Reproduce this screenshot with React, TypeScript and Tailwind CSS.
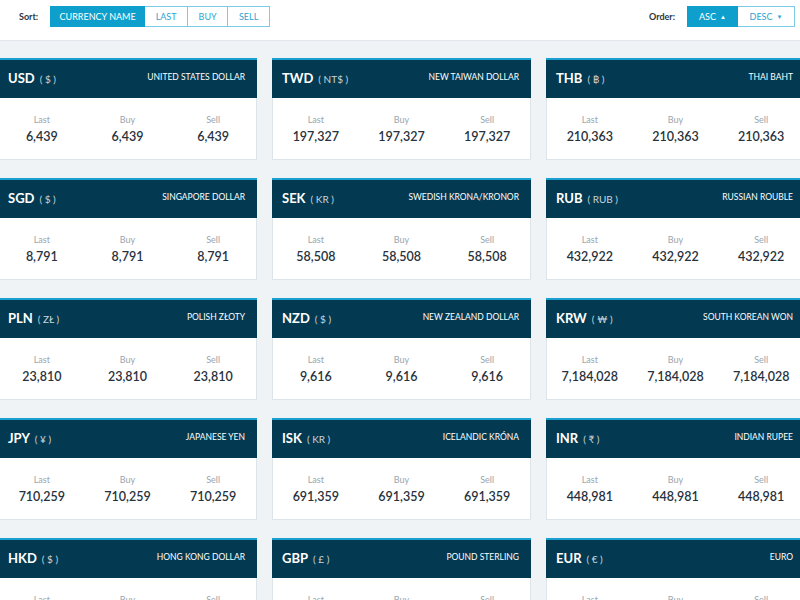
import React from 'react'

type Rate = { code: string; sym: string; name: string; value: string }

const rates: Rate[] = [
  { code: 'USD', sym: '$', name: 'UNITED STATES DOLLAR', value: '6,439' },
  { code: 'TWD', sym: 'NT$', name: 'NEW TAIWAN DOLLAR', value: '197,327' },
  { code: 'THB', sym: '฿', name: 'THAI BAHT', value: '210,363' },
  { code: 'SGD', sym: '$', name: 'SINGAPORE DOLLAR', value: '8,791' },
  { code: 'SEK', sym: 'KR', name: 'SWEDISH KRONA/KRONOR', value: '58,508' },
  { code: 'RUB', sym: 'RUB', name: 'RUSSIAN ROUBLE', value: '432,922' },
  { code: 'PLN', sym: 'ZŁ', name: 'POLISH ZŁOTY', value: '23,810' },
  { code: 'NZD', sym: '$', name: 'NEW ZEALAND DOLLAR', value: '9,616' },
  { code: 'KRW', sym: '₩', name: 'SOUTH KOREAN WON', value: '7,184,028' },
  { code: 'JPY', sym: '¥', name: 'JAPANESE YEN', value: '710,259' },
  { code: 'ISK', sym: 'KR', name: 'ICELANDIC KRÓNA', value: '691,359' },
  { code: 'INR', sym: '₹', name: 'INDIAN RUPEE', value: '448,981' },
  { code: 'HKD', sym: '$', name: 'HONG KONG DOLLAR', value: '3,046' },
  { code: 'GBP', sym: '£', name: 'POUND STERLING', value: '1,079' },
  { code: 'EUR', sym: '€', name: 'EURO', value: '1,004' },
]

const Card = ({ r }: { r: Rate }) => (
  <div className="flex flex-col border-t-2 border-[#1b9fd0] bg-white">
    <div className="flex h-[38px] items-start justify-between bg-[#033a52] pl-[10px] pr-[12px] pt-[9px] text-white">
      <div className="flex items-baseline">
        <span className="text-[13px] font-bold">{r.code}</span>
        <span className="ml-[5px] text-[10px] text-[#c9d6de]">( {r.sym} )</span>
      </div>
      <span className="pt-[2px] text-[8.5px]">{r.name}</span>
    </div>
    <div className="grid h-[62px] grid-cols-3 border-x border-b border-[#dde4ea] pt-[16px]">
      {['Last', 'Buy', 'Sell'].map((l) => (
        <div key={l} className="flex flex-col items-center">
          <span className="text-[9px] leading-[12px] text-[#9aa5ae]">{l}</span>
          <span className="mt-[3px] text-[12.5px] font-semibold leading-[16px] text-[#27323d]">{r.value}</span>
        </div>
      ))}
    </div>
  </div>
)

export default function App() {
  return (
    <div className="h-[600px] w-[800px] overflow-hidden bg-[#eff3f6] font-['Lato','Liberation_Sans',sans-serif]">
      <div className="flex h-[41px] items-start justify-between border-b border-[#e1e7ec] bg-white pl-[19px] pr-[5px] pt-[6px]">
        <div className="flex h-[21px] items-center">
          <span className="mr-[12px] text-[9px] font-bold text-[#2b3640]">Sort:</span>
          <div className="flex h-[21px] text-[9px] uppercase">
            <div className="flex w-[95px] items-center justify-center border border-[#0f9fcd] bg-[#0f9fcd] text-white">Currency Name</div>
            <div className="flex w-[43px] items-center justify-center border-y border-r border-[#7ccbe6] text-[#2da4d1]">Last</div>
            <div className="flex w-[40px] items-center justify-center border-y border-r border-[#7ccbe6] text-[#2da4d1]">Buy</div>
            <div className="flex w-[42px] items-center justify-center border-y border-r border-[#7ccbe6] text-[#2da4d1]">Sell</div>
          </div>
        </div>
        <div className="flex h-[21px] items-center">
          <span className="mr-[12px] text-[9px] font-bold text-[#2b3640]">Order:</span>
          <div className="flex h-[21px] text-[9px] uppercase">
            <div className="flex w-[51px] items-center justify-center gap-[4px] border border-[#0f9fcd] bg-[#0f9fcd] text-white">
              ASC <span className="text-[6px]">▲</span>
            </div>
            <div className="flex w-[57px] items-center justify-center gap-[4px] border-y border-r border-[#7ccbe6] text-[#2da4d1]">
              DESC <span className="text-[6px]">▼</span>
            </div>
          </div>
        </div>
      </div>
      <div className="ml-[-2px] mt-[17px] grid w-[807px] grid-cols-[259px_259px_259px] gap-x-[15px] gap-y-[18px]">
        {rates.map((r) => (
          <Card key={r.code} r={r} />
        ))}
      </div>
    </div>
  )
}
